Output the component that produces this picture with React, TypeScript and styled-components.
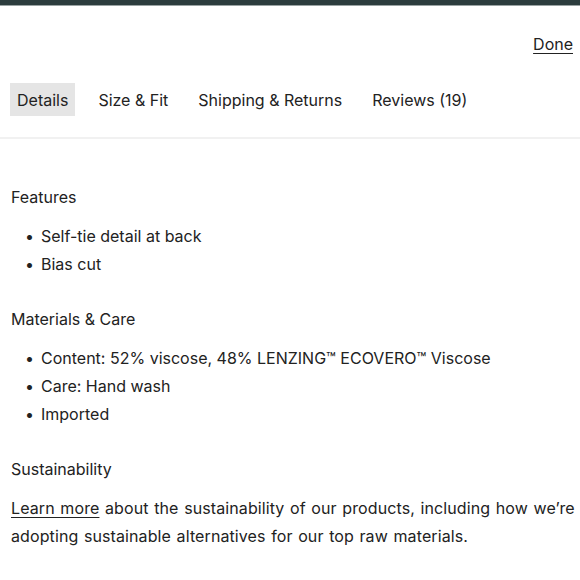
import React from "react";
import styled, { createGlobalStyle } from "styled-components";

const Global = createGlobalStyle`
  html, body { margin: 0; padding: 0; background: #fff; }
  body { font-family: "Inter", "Noto Sans", sans-serif; color: #222; -webkit-font-smoothing: antialiased; }
`;

const Page = styled.div`
  width: 580px;
  height: 580px;
  overflow: hidden;
  display: flex;
  flex-direction: column;
`;

const TopBar = styled.div`
  height: 5px;
  background: #2c3c3d;
  border-bottom: 1px solid #9aa3a3;
`;

const Header = styled.div`
  display: flex;
  justify-content: flex-end;
  padding: 28px 7px 0 0;
  height: 46px;
  box-sizing: border-box;
`;

const Done = styled.a`
  font-size: 16px;
  color: #222;
  text-decoration: underline;
  text-underline-offset: 3px;
`;

const Tabs = styled.div`
  display: flex;
  gap: 16px;
  padding: 31px 0 0 10px;
  height: 87px;
  box-sizing: border-box;
  border-bottom: 2px solid #f1f1f1;
`;

const Tab = styled.div<{ $active?: boolean }>`
  height: 33px;
  display: flex;
  align-items: center;
  padding: 0 7px;
  font-size: 16px;
  background: ${(p) => (p.$active ? "#e5e5e5" : "transparent")};
  color: #222;
`;

const Content = styled.div`
  padding: 44px 2px 0 11px;
  display: flex;
  flex-direction: column;
`;

const Heading = styled.div`
  font-size: 16px;
  line-height: 28px;
  color: #222;
`;

const List = styled.ul`
  margin: 11px 0 27px;
  padding: 0 0 0 30px;
  list-style: none;
`;

const Item = styled.li`
  font-size: 16px;
  line-height: 28px;
  position: relative;
  &::before {
    content: "•";
    position: absolute;
    left: -16px;
  }
`;

const Para = styled.p`
  margin: 11px 0 0;
  font-size: 16px;
  line-height: 28px;
  letter-spacing: 0.1px;
  word-spacing: 1px;
`;

const Link = styled.a`
  color: #222;
  text-decoration: underline;
  text-underline-offset: 3px;
`;

export default function App() {
  return (
    <Page>
      <Global />
      <TopBar />
      <Header>
        <Done>Done</Done>
      </Header>
      <Tabs>
        <Tab $active>Details</Tab>
        <Tab>Size &amp; Fit</Tab>
        <Tab>Shipping &amp; Returns</Tab>
        <Tab>Reviews (19)</Tab>
      </Tabs>
      <Content>
        <Heading>Features</Heading>
        <List>
          <Item>Self-tie detail at back</Item>
          <Item>Bias cut</Item>
        </List>
        <Heading>Materials &amp; Care</Heading>
        <List>
          <Item>Content: 52% viscose, 48% LENZING™ ECOVERO™ Viscose</Item>
          <Item>Care: Hand wash</Item>
          <Item>Imported</Item>
        </List>
        <Heading>Sustainability</Heading>
        <Para>
          <Link>Learn more</Link> about the sustainability of our products, including how we’re adopting sustainable alternatives for our top raw materials.
        </Para>
      </Content>
    </Page>
  );
}
